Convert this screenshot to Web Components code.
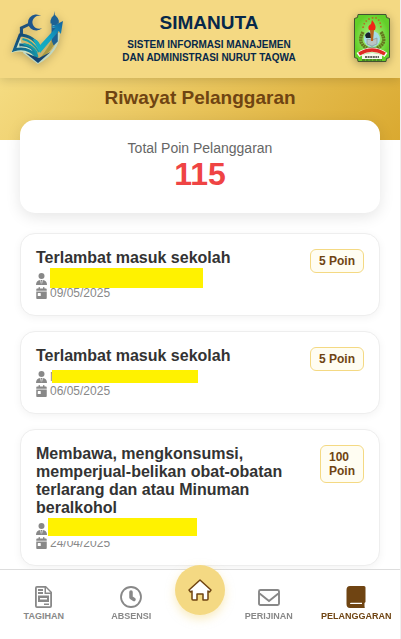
<!DOCTYPE html>
<html lang="id">
<head>
<meta charset="utf-8">
<meta name="viewport" content="width=device-width, initial-scale=1">
<title>SIMANUTA</title>
<style>
  html {
    background: #f0f0f0;
  }

  body {
    margin: 0 1px 0 0;
    height: 100vh;
    overflow: hidden;
    background: #fff;
    font-family: "Liberation Sans", Arial, sans-serif;
    --gold: #f4d983;
    --brown: #6f4412;
  }
</style>
</head>
<body>
<simanuta-app></simanuta-app>

<script>
function define(name, html) {
  const template = document.createElement("template");
  template.innerHTML = html;

  window.customElements.define(name, class extends HTMLElement {
    constructor() {
      super();
      this.attachShadow({ mode: "open" });
      this.shadowRoot.appendChild(template.content.cloneNode(true));
    }
  });
}

define("book-logo", /*html*/ `
  <style>
    :host { display: block; filter: drop-shadow(0 2px 4px rgba(0, 0, 0, 0.25)); }
    svg { display: block; }
  </style>
  <svg width="54" height="56" viewBox="3 0 52 56" preserveAspectRatio="none" aria-hidden="true">
    <defs>
      <linearGradient id="arrow" x1="0" x2="1" y1="1" y2="0">
        <stop offset="0" stop-color="#17b5bd"/>
        <stop offset=".5" stop-color="#12a3c4"/>
        <stop offset="1" stop-color="#13609e"/>
      </linearGradient>
      <linearGradient id="page" x1="0" x2="1" y1="0" y2="1">
        <stop offset="0" stop-color="#153d6c"/>
        <stop offset="1" stop-color="#159eb0"/>
      </linearGradient>
    </defs>
    <path d="M50 23Q50 41 30 53L16 42" fill="none" stroke="#bfd8c4" stroke-width="2"/>
    <path d="M48 25Q46 41 31 49Q41 37 45 26Z" fill="#a89a43"/>
    <path d="M22 14 14 18V25" fill="none" stroke="#1d507c" stroke-width="3"/>
    <path d="M12 24 4 43Q18 38 29 50Q26 34 14 33" fill="#cfe3c6"/>
    <path d="M13 24 7 40Q20 36 29 47Q26 34 12 35M12 25Q26 25 33 40" fill="none" stroke="url(#page)" stroke-width="2.8"/>
    <path d="M15 29Q25 31 31 42M16 34Q24 35 29 43" fill="none" stroke="#149ca9" stroke-width="1.8"/>
    <path d="M18 43 30 53 42 42 31 48Z" fill="#134573"/>
    <path d="M33 6A8 8 0 1 0 34 18A6.500 6.500 0 1 1 33 6Z" fill="#1d568d"/>
    <path d="M38 1.500V5Q41 8 42 11V14H41V32L37 36 35 31V14H34V11Q35 7 37 6Z" transform="translate(8 -0.500)" fill="#1e6293"/>
    <path d="M44 15H47V18H44Z" fill="#72aac0"/>
    <path d="M25 29Q30 29 32 35L47 18 43 17 54 11 52 24 50 21 32 43Z" fill="url(#arrow)"/>
  </svg>
`);

define("school-crest", /*html*/ `
  <style>
    :host { display: block; filter: drop-shadow(0 2px 4px rgba(0, 0, 0, 0.3)); }
    svg { display: block; }
  </style>
  <svg width="36" height="48" viewBox="0 0 36 48" aria-hidden="true">
    <defs>
      <radialGradient id="field">
        <stop stop-color="#b9f48e"/>
        <stop offset="1" stop-color="#62cf28"/>
      </radialGradient>
    </defs>
    <path d="M4 .5H32L32.500 3.500 35.500 4.500V43.500L32.500 44.500 32 47.500H4L3.500 44.500 .5 43.500V4.500L3.500 3.500Z" fill="url(#field)" stroke="#435331"/>
    <path d="M9 14Q10 6 18 4T27 14" fill="none" stroke="#b66822" stroke-width="1.500" stroke-dasharray="1.500 2"/>
    <path d="M9 18Q3 29 13 34M27 18Q34 29 23 34" fill="none" stroke="#66751e" stroke-width="3.500" stroke-dasharray="2 .5"/>
    <circle cx="18" cy="25" r="8" fill="#a6dce7"/>
    <path d="M11 21Q14 16 17 20V24H12Z" fill="#18232b"/>
    <path d="M13 25 18 26 23 24V30L18 32 13 30Z" fill="#b9c4c4" stroke="#8a9898" stroke-width=".7"/>
    <path d="M16 16H20L19 27H17Z" fill="#b8621e"/>
    <path d="M18 6Q23 12 21 16H15Q13 12 17 10Z" fill="#ef2616"/>
    <path d="M12 35Q18 32 24 35" fill="none" stroke="#356b22" stroke-width="1.500"/>
    <path d="M4 41Q18 31 32 41" fill="none" stroke="#fff" stroke-width="5"/>
    <path d="M5 40Q18 32 31 40" fill="none" stroke="#df2b24" stroke-width="3.500"/>
    <path d="M8 41Q18 37 28 41V45H8Z" fill="#f8f8ef"/>
    <path d="M11 43H25" stroke="#333" stroke-width="1.500" stroke-dasharray="2 .6"/>
    <path d="M8 46H28" stroke="#314420" stroke-dasharray="3 .7"/>
  </svg>
`);

define("app-header", /*html*/ `
  <style>
    :host {
      position: relative;
      z-index: 2;
      display: flex;
      align-items: center;
      justify-content: space-between;
      box-sizing: border-box;
      height: 78px;
      padding: 0 10px 3px;
      background: var(--gold);
      box-shadow: 0 2px 10px rgba(0, 0, 0, 0.15);
      color: #07284a;
      text-align: center;
    }
    .title { flex: 1; }
    h1 { margin: 0 0 4px; font-size: 19px; line-height: 22px; }
    p { margin: 0; font-size: 10px; font-weight: bold; line-height: 13px; }
  </style>
  <book-logo></book-logo>
  <div class="title">
    <h1><slot name="name"></slot></h1>
    <p><slot></slot></p>
  </div>
  <school-crest></school-crest>
`);

define("page-banner", /*html*/ `
  <style>
    :host {
      display: block;
      box-sizing: border-box;
      height: 62px;
      padding-top: 8px;
      background: linear-gradient(135deg, #f5dc82, #daa930);
      text-align: center;
    }
    h2 { margin: 0; color: var(--brown); font-size: 19px; line-height: 24px; }
  </style>
  <h2><slot></slot></h2>
`);

define("total-card", /*html*/ `
  <style>
    :host {
      display: block;
      margin: -20px 20px 0;
      padding: 20px;
      border-radius: 15px;
      background: #fff;
      box-shadow: 0 4px 15px rgba(0, 0, 0, 0.1);
      text-align: center;
    }
    .label { color: #666; font-size: 14px; line-height: 16px; }
    .total { color: #ef4444; font-size: 32px; font-weight: bold; line-height: 37px; }
  </style>
  <div class="label"><slot></slot></div>
  <div class="total"><slot name="total"></slot></div>
`);

define("violation-card", /*html*/ `
  <style>
    :host {
      display: flex;
      align-items: flex-start;
      justify-content: space-between;
      gap: 10px;
      padding: 15px;
      border: 1px solid #eee;
      border-radius: 15px;
      background: #fff;
      box-shadow: 0 2px 8px rgba(0, 0, 0, 0.05);
    }
    h3 { margin: 0 0 5px; color: #333; font-size: 16px; line-height: 18px; }
    .row {
      display: flex;
      align-items: center;
      gap: 3px;
      height: 14px;
      color: #888;
      font-size: 12px;
      line-height: 14px;
    }
    .reporter { position: relative; }
    svg { width: 11px; height: 12px; fill: currentColor; }
    .points {
      padding: 4px 8px;
      border: 1px solid var(--gold);
      border-radius: 6px;
      background: #fffdf2;
      color: var(--brown);
      font-size: 12px;
      font-weight: bold;
      line-height: 14px;
    }
  </style>
  <div>
    <h3><slot></slot></h3>
    <div class="row reporter">
      <svg viewBox="0 0 11 12" aria-hidden="true"><circle cx="5.500" cy="3" r="3"/><path d="M4.200 7 5.100 11.400 5.200 8.500 4.700 7H6.300L5.800 8.500 5.900 11.400 6.800 7Q11 7.500 11 12H0Q0 7.500 4.200 7Z"/></svg>
      <slot name="reporter"></slot>
    </div>
    <div class="row">
      <svg viewBox="0 0 448 512" aria-hidden="true"><path d="M128 0c18 0 32 14 32 32v32h128V32a32 32 0 0 1 64 0v32h48c27 0 48 21 48 48v48H0v-48c0-27 21-48 48-48h48V32c0-18 14-32 32-32zM0 192h448v272c0 27-21 48-48 48H48c-27 0-48-21-48-48zm80 64a16 16 0 0 0-16 16v96c0 9 7 16 16 16h96c9 0 16-7 16-16v-96a16 16 0 0 0-16-16z"/></svg>
      <slot name="date"></slot>
    </div>
  </div>
  <div class="points"><slot name="points"></slot></div>
`);

// Bar laid over a hidden name
define("name-mask", /*html*/ `
  <style>
    :host {
      position: absolute;
      top: var(--top, 0);
      left: var(--left, 14px);
      width: var(--width, 149px);
      height: var(--height, 20px);
      background: #fff200;
      box-shadow: 0 var(--below, 0) #fff;
    }
  </style>
`);

define("nav-item", /*html*/ `
  <style>
    :host { display: block; min-width: 0; color: #888; }
    :host([active]) { color: var(--brown); }
    a {
      display: flex;
      flex-direction: column;
      align-items: center;
      gap: 2px;
      color: inherit;
      text-decoration: none;
      font-size: 9px;
      font-weight: bold;
      line-height: 13px;
    }
  </style>
  <a href="#"><slot name="icon"></slot><slot></slot></a>
`);

define("bottom-nav", /*html*/ `
  <style>
    :host {
      position: fixed;
      right: 1px;
      bottom: 0;
      left: 0;
      z-index: 3;
      display: grid;
      grid-template-columns: 1fr 1fr 50px 1fr 1fr;
      box-sizing: border-box;
      height: 70px;
      padding-top: 16px;
      border-top: 1px solid #ddd;
      background: #fff;
    }
    svg { display: block; width: 22px; height: 22px; fill: currentColor; }
    .home {
      display: flex;
      align-items: center;
      justify-content: center;
      width: 50px;
      height: 50px;
      margin-top: -21px;
      border-radius: 50%;
      background: var(--gold);
      box-shadow: 0 4px 10px rgba(244, 217, 131, 0.5);
      color: var(--brown);
    }
    .home svg { width: 26px; height: 26px; }
  </style>
  <nav-item>
    <svg slot="icon" viewBox="0 0 22 22" aria-hidden="true"><path fill-rule="evenodd" d="M4 0H13L19 6V20Q19 22 17 22H4Q2 22 2 20V2Q2 0 4 0ZM3.800 1.800V20.200H17.200V8H11.500V1.800ZM5 3H10V5H5ZM5 6H10V8H5ZM13 2V6.500H17.500ZM5 9.500H16V16H5ZM7 12V13.500H14V12ZM11 17.500H16V19H11Z"/></svg>
    TAGIHAN
  </nav-item>
  <nav-item>
    <svg slot="icon" viewBox="0 0 22 22" aria-hidden="true"><circle cx="11" cy="11" r="10" fill="none" stroke="currentColor" stroke-width="1.800"/><path d="M11 6V11.500L14 13.500" fill="none" stroke="currentColor" stroke-width="3.500" stroke-linecap="round" stroke-linejoin="round"/></svg>
    ABSENSI
  </nav-item>
  <a class="home" href="#" aria-label="Beranda">
    <svg viewBox="0 0 26 26" aria-hidden="true"><path d="M2 13 13 3 24 13 22.500 15 21 14V22Q21 23 20 23H16V17H10V23H6Q5 23 5 22V14L3.500 15Z" fill="#fff" stroke="currentColor" stroke-width="1.500" stroke-linejoin="round"/></svg>
  </a>
  <nav-item>
    <svg slot="icon" viewBox="0 0 22 22" aria-hidden="true"><path d="M2.500 4H19.500Q21 4 21 5.500V17.500Q21 19 19.500 19H2.500Q1 19 1 17.500V5.500Q1 4 2.500 4ZM1 7 11 15 21 7" fill="none" stroke="currentColor" stroke-width="1.900"/></svg>
    PERIJINAN
  </nav-item>
  <nav-item active>
    <svg slot="icon" viewBox="0 0 22 22" aria-hidden="true"><path fill-rule="evenodd" d="M5 0H19Q20.500 0 20.500 1.500V16L19.500 17V20.500Q20.500 22 18.500 22H5Q1.500 22 1.500 18V4Q1.500 0 5 0ZM6 16.800Q5 16.800 5 17.400T6 18H17V16.800Z"/></svg>
    PELANGGARAN
  </nav-item>
`);

define("simanuta-app", /*html*/ `
  <style>
    :host { display: block; }
    main { display: grid; gap: 15px; padding: 20px 20px 90px; }
  </style>
  <app-header>
    <span slot="name">SIMANUTA</span>
    SISTEM INFORMASI MANAJEMEN<br>DAN ADMINISTRASI NURUT TAQWA
  </app-header>
  <page-banner>Riwayat Pelanggaran</page-banner>
  <total-card>Total Poin Pelanggaran<span slot="total">115</span></total-card>
  <main>
    <violation-card>
      Terlambat masuk sekolah
      <name-mask slot="reporter" style="--top: -4px; --width: 153px"></name-mask>
      <span slot="date">09/05/2025</span>
      <span slot="points">5 Poin</span>
    </violation-card>
    <violation-card>
      Terlambat masuk sekolah
      <span slot="reporter">N</span>
      <name-mask slot="reporter" style="--left: 16px; --width: 146px; --height: 13px"></name-mask>
      <span slot="date">06/05/2025</span>
      <span slot="points">5 Poin</span>
    </violation-card>
    <violation-card>
      Membawa, mengkonsumsi, memperjual-belikan obat-obatan terlarang dan atau Minuman beralkohol
      <name-mask slot="reporter" style="--top: -4px; --left: 12px; --height: 18px; --below: 5px"></name-mask>
      <span slot="date">24/04/2025</span>
      <span slot="points">100 Poin</span>
    </violation-card>
  </main>
  <bottom-nav></bottom-nav>
`);
</script>
</body>
</html>
